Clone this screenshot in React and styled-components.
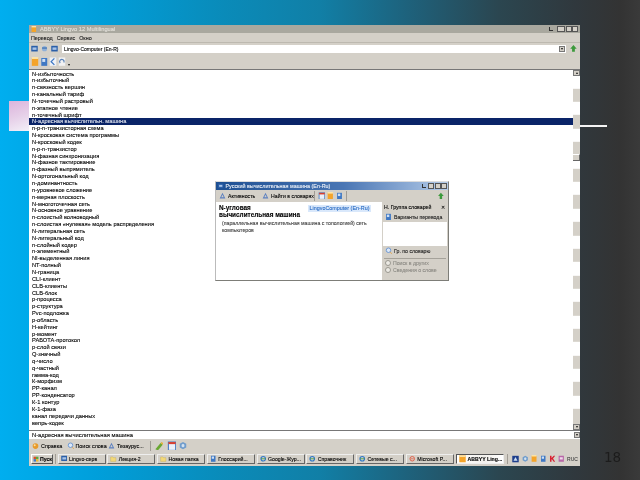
import React from "react";
import styled, { createGlobalStyle } from "styled-components";

const Global = createGlobalStyle`
  html, body { margin: 0; padding: 0; width: 640px; height: 480px; overflow: hidden; }
  #root { width: 640px; height: 480px; }
`;

const Slide = styled.div`
  position: relative;
  box-sizing: border-box;
  width: 640px;
  height: 480px;
  padding: 25px 60px 14px 29px;
  background: linear-gradient(90deg, #00aeef 0%, #009fdb 15%, #0a8bb9 35%, #117fa6 50%, #1f5f78 65%, #2b4650 78%, #30383d 90%, #333 97%, #3a3a3a 100%);
  font-family: "Liberation Sans", Arial, sans-serif;
`;

const PinkSquare = styled.div`
  position: absolute;
  left: 9px;
  top: 101px;
  width: 20px;
  height: 30px;
  background: linear-gradient(160deg, #dcb4dc 0%, #e6cfe8 50%, #f3f0f8 100%);
`;

const WhiteLine = styled.div`
  position: absolute;
  left: 580px;
  top: 124.5px;
  width: 27px;
  height: 2.5px;
  background: #f4f4f4;
`;

const PageNumber = styled.div`
  position: absolute;
  left: 604px;
  top: 449px;
  font: 13.5px "DejaVu Sans", sans-serif;
  color: #1c1c1c;
  filter: blur(0.3px);
`;

const Window = styled.div`
  position: relative;
  height: 100%;
  display: flex;
  flex-direction: column;
  background: #d4d0c8;
  filter: blur(0.4px);
  color: #000;
  font-size: 5.7px;
  -webkit-text-stroke: 0.1px currentColor;
`;

const TitleBar = styled.div`
  flex: 0 0 8px;
  display: flex;
  align-items: center;
  gap: 3px;
  padding: 0 2px;
  background: #a9a89f;
  color: #e4e2dc;
`;

const Grow = styled.div`flex: 1;`;

const WinBtn = styled.span`
  width: ${(p) => p.$w || 6}px;
  height: 6px;
  background: #d4d0c8;
  border: 0.5px solid #555;
  box-sizing: border-box;
  display: block;
`;

const WinBtns = styled.div`
  display: flex;
  align-items: center;
  gap: 0.5px;
  margin-left: ${(p) => p.$gap || 0}px;
`;

const PinMark = styled.span`
  width: 4px;
  height: 4px;
  border-left: 1px solid #333;
  border-bottom: 1px solid #333;
  box-sizing: border-box;
`;

const MenuBar = styled.div`
  flex: 0 0 9px;
  display: flex;
  align-items: center;
  gap: 4px;
  padding: 0 2px;
  font-size: 5.4px;
  color: #222;
`;

const AddressBar = styled.div`
  flex: 0 0 12px;
  display: flex;
  align-items: center;
  gap: 3px;
  padding: 0 3px 0 2px;
  border-top: 1px solid #bdb9b0;
  box-sizing: border-box;
`;

const AddressInput = styled.div`
  flex: 1;
  height: 8px;
  margin-left: 1px;
  background: #fff;
  display: flex;
  align-items: center;
  justify-content: space-between;
  padding: 0 1px 0 2px;
  font-size: 5px;
`;

const ToolRow = styled.div`
  flex: 0 0 15px;
  display: flex;
  align-items: center;
  gap: 0.5px;
  padding: 0 2px;
  box-sizing: border-box;
`;

const Arrow = styled.span`
  width: 0;
  height: 0;
  margin: 6px 0 0 2px;
  border-left: 1.5px solid transparent;
  border-right: 1.5px solid transparent;
  border-top: 2px solid #111;
`;

const ListArea = styled.div`
  flex: 1;
  min-height: 0;
  display: flex;
  background: #fff;
  border-top: 1px solid #777;
  border-bottom: 1px solid #777;
`;

const List = styled.div`
  flex: 1;
  padding-top: 0.5px;
  overflow: hidden;
`;

const Row = styled.div`
  height: 6.85px;
  line-height: 6.85px;
  padding-left: 3px;
  white-space: nowrap;
  background: ${(p) => (p.$selected ? "#0a2468" : "transparent")};
  color: ${(p) => (p.$selected ? "#dfe3ee" : "#000")};
`;

const Scrollbar = styled.div`
  flex: 0 0 7px;
  display: flex;
  flex-direction: column;
  background: repeating-linear-gradient(180deg, #d4d0c8 0, #d4d0c8 13.35px, #fff 13.35px, #fff 26.7px) 0 -8.2px;
`;

const ScrollBtn = styled.div`
  flex: 0 0 6px;
  height: 6px;
  background: #d4d0c8;
  border: 0.5px solid #777;
  box-sizing: border-box;
  display: flex;
  align-items: center;
  justify-content: center;
`;

const Tri = styled.span`
  width: 0;
  height: 0;
  border-left: 1.5px solid transparent;
  border-right: 1.5px solid transparent;
  ${(p) => (p.$up ? "border-bottom: 2px solid #111;" : "border-top: 2px solid #111;")}
`;

const ScrollGap = styled.div`
  flex: 0 0 78px;
`;

const Thumb = styled.div`
  flex: 0 0 7px;
  background: #d4d0c8;
  border-bottom: 1px solid #666;
  border-right: 1px solid #666;
  border-top: 0.5px solid #fff;
  box-sizing: border-box;
`;

const ScrollFill = styled.div`
  flex: 1;
`;

const StatusInput = styled.div`
  flex: 0 0 8px;
  display: flex;
  align-items: center;
  justify-content: space-between;
  background: #fff;
  padding: 0 0.5px 0 3px;
  font-size: 5.8px;
`;

const LinksBar = styled.div`
  flex: 0 0 13px;
  display: flex;
  align-items: center;
  padding-left: 3px;
  gap: 3.5px;
  font-size: 5.4px;
`;

const LinkItem = styled.span`
  display: flex;
  align-items: center;
  gap: 2px;
  width: ${(p) => p.$w}px;
  white-space: nowrap;
`;

const Sep = styled.span`
  width: 1px;
  height: 10px;
  background: #a09c94;
  margin: 0 ${(p) => p.$m ?? 2}px;
  flex: none;
`;

const TaskBar = styled.div`
  flex: 0 0 14px;
  display: flex;
  align-items: center;
  gap: 1.75px;
  padding: 0 2px;
  font-size: 5.2px;
`;

const StartBtn = styled.div`
  width: 22px;
  height: 10px;
  box-sizing: border-box;
  display: flex;
  align-items: center;
  gap: 1px;
  padding-left: 1px;
  font-weight: bold;
  background: #d4d0c8;
  border-right: 1px solid #555;
  border-bottom: 1px solid #555;
  border-top: 1px solid #fff;
  border-left: 1px solid #fff;
`;

const TaskBtn = styled.div`
  width: 48px;
  height: 10px;
  box-sizing: border-box;
  display: flex;
  align-items: center;
  gap: 2px;
  padding-left: 2px;
  white-space: nowrap;
  overflow: hidden;
  flex: none;
  font-weight: ${(p) => (p.$active ? "bold" : "normal")};
  background: ${(p) => (p.$active ? "linear-gradient(90deg,#fff,#f2f0ec 60%,#fff)" : "#d4d0c8")};
  border-right: 1px solid ${(p) => (p.$active ? "#eee" : "#666")};
  border-bottom: 1px solid ${(p) => (p.$active ? "#eee" : "#666")};
  border-top: 1px solid ${(p) => (p.$active ? "#555" : "#eee")};
  border-left: 1px solid ${(p) => (p.$active ? "#555" : "#eee")};
`;

const Tray = styled.div`
  display: flex;
  align-items: center;
  gap: 2.6px;
  font-size: 5px;
  color: #444;
`;

const Dialog = styled.div`
  position: absolute;
  left: 186px;
  top: 156px;
  width: 234px;
  height: 100px;
  box-sizing: border-box;
  display: flex;
  flex-direction: column;
  background: #d4d0c8;
  border: 1px solid #7d7d78;
  border-top-color: #ddd;
  border-left-color: #bbb;
`;

const DialogTitle = styled.div`
  flex: 0 0 7.5px;
  display: flex;
  align-items: center;
  gap: 2px;
  padding: 0 1px 0 2px;
  background: linear-gradient(90deg, #1d4f92 0%, #4a76b4 55%, #b4cbe8 100%);
  color: #eef2f8;
  font-size: 5.4px;
`;

const DialogTools = styled.div`
  flex: 0 0 12px;
  display: flex;
  align-items: center;
  gap: 2px;
  padding: 0 4px 0 3px;
  font-size: 5.2px;
`;

const ToolLabel = styled.span`
  width: ${(p) => p.$w}px;
  white-space: nowrap;
`;

const DialogBody = styled.div`
  flex: 1;
  min-height: 0;
  display: flex;
`;

const Article = styled.div`
  position: relative;
  flex: 1;
  min-width: 0;
  background: #fff;
  padding: 2px 2px 0 3px;
`;

const Headword = styled.div`
  font-weight: bold;
  font-size: 6.4px;
  line-height: 7.5px;
`;

const Definition = styled.div`
  margin: 1px 0 0 3px;
  font-size: 5.2px;
  line-height: 7px;
  color: #444;
  white-space: nowrap;
`;

const Badge = styled.div`
  position: absolute;
  left: 92px;
  top: 3px;
  width: 63px;
  height: 7px;
  background: #d9e8fb;
  color: #2a6cc4;
  font-size: 5.4px;
  line-height: 7px;
  text-align: center;
  white-space: nowrap;
`;

const Side = styled.div`
  flex: 0 0 66px;
  display: flex;
  flex-direction: column;
  font-size: 5.2px;
`;

const SideHead = styled.div`
  flex: 0 0 10px;
  display: flex;
  align-items: center;
  justify-content: space-between;
  padding: 0 3px 0 2px;
`;

const SideRow = styled.div`
  flex: 0 0 ${(p) => p.$h || 10}px;
  display: flex;
  align-items: center;
  gap: 2px;
  padding-left: 3px;
  color: ${(p) => (p.$muted ? "#8c8a84" : "#222")};
`;

const SideBox = styled.div`
  flex: 0 0 24px;
  margin: 0 1px;
  background: #fff;
`;

const SideRule = styled.div`
  flex: 0 0 1px;
  margin: 1px 2px 1px;
  background: #a5a29a;
`;

const Ring = styled.span`
  width: 6px;
  height: 6px;
  box-sizing: border-box;
  border: 1px solid #9a9890;
  border-radius: 50%;
  background: #eceae4;
  flex: none;
`;

const ICONS = {
  blueBox: <><rect x="0" y="1" width="8" height="7" fill="#2b5fa8" /><rect x="1.5" y="3" width="5" height="3" fill="#a9c4e8" /></>,
  arrows: <><circle cx="4" cy="4.5" r="3.2" fill="#8fb0d8" /><path d="M1 3h6v1.5H1z" fill="#3f6fb0" /></>,
  book: <><rect x="0.5" y="1" width="6.5" height="8" fill="#f4a42a" /><rect x="0.5" y="0" width="6.5" height="2" fill="#fbe3a8" /></>,
  page: <><rect x="1" y="1" width="6" height="8" fill="#3f78c4" /><rect x="2" y="2" width="3" height="3" fill="#cfe0f4" /></>,
  swirl: <><rect x="0.5" y="0.5" width="7" height="9" fill="#eef2f8" /><path d="M5.5 1.5 2 5l3.5 3.5" fill="none" stroke="#3f78c4" strokeWidth="1.4" /></>,
  swirl2: <><rect x="0.5" y="0.5" width="7" height="9" fill="#f2f2f2" /><path d="M2 6.5A2.4 2.4 0 1 1 6 6" fill="none" stroke="#5a82b8" strokeWidth="1.3" /></>,
  green: <path d="M4.5 1 8 5H6v3.5H3V5H1z" fill="#3c9a3c" />,
  orangeBall: <><circle cx="4" cy="5" r="3.5" fill="#e89a2a" /><circle cx="3" cy="4" r="1.2" fill="#fde0a0" /></>,
  lens: <><circle cx="4" cy="4" r="2.8" fill="#dbe8f8" stroke="#5a8cd0" strokeWidth="1" /><path d="M6 6l2 2.5" stroke="#e0a040" strokeWidth="1" /></>,
  tri: <path d="M4 1 7.5 8h-7zM4 3.5 2.5 6.5h3z" fill="#5a7fc0" fillRule="evenodd" />,
  pencil: <><path d="M1 8 6 2l2 1.5L3.5 9z" fill="#6aa832" /><path d="M6 2l2 1.5 .5-1.5L7 1z" fill="#e8b030" /></>,
  win: <><rect x="1" y="1" width="7" height="8" fill="#eaf0f8" stroke="#3f78c4" /><rect x="1" y="1" width="7" height="2" fill="#d84030" /></>,
  cube: <><path d="M4 1 7.5 3v4L4 9 .5 7V3z" fill="#6f9ccc" /><path d="M4 3 5.5 4v2L4 7 2.5 6V4z" fill="#d4e2f0" /></>,
  flag: <><rect x="0.5" y="1" width="3.5" height="3.5" fill="#d8502a" /><rect x="4" y="1" width="3.5" height="3.5" fill="#5aa83c" /><rect x="0.5" y="4.5" width="3.5" height="3.5" fill="#3f78c4" /><rect x="4" y="4.5" width="3.5" height="3.5" fill="#e8b830" /></>,
  ie: <><circle cx="4" cy="5" r="3" fill="none" stroke="#2f78c8" strokeWidth="1.5" /><path d="M1 5h6" stroke="#3c9a3c" /></>,
  folder: <><path d="M0.5 2.5h3l1 1h3v5h-7z" fill="#f2d878" stroke="#b8983c" strokeWidth=".4" /></>,
  pptx: <><circle cx="4" cy="5" r="3" fill="none" stroke="#e0604a" strokeWidth="1.3" /><path d="M2 5h4" stroke="#e0604a" /></>,
  k: <path d="M1 1h2v3l3-3h2L5 4.5 8 9H6L3.5 5.5 3 6v3H1z" fill="#d82030" />,
  lingvo: <><rect x="0" y="0.5" width="8" height="8.5" fill="#f4a42a" /><rect x="0" y="0.5" width="8" height="2" fill="#fbe0a0" /></>,
  shield: <><rect x="0" y="1" width="8" height="8" fill="#1f3f8c" /><path d="M4 2.5 6.5 7h-5z" fill="#cfe0f4" /></>,
  purple: <><rect x="0.5" y="1" width="7" height="8" fill="#b868a8" /><rect x="2" y="3" width="4" height="3" fill="#f0d8ec" /></>,
};

const Icon = ({ name, size = 7 }) => (
  <svg width={size} height={size * 1.1} viewBox="0 0 8 9.5" style={{ flex: "none", display: "block" }}>
    {ICONS[name]}
  </svg>
);

const ROWS = [
  "N-избыточность", "n-избыточный", "n-связность вершин", "n-канальный тариф", "N-точечный растровый",
  "n-этапное чтение", "n-точечный шрифт", "N-адресная вычислительн. машина", "n-р-n-транзисторная схема",
  "N-кросковая система программы", "N-кросковый кодек", "n-р-n-транзистор", "N-фазная синхронизация",
  "N-фазное тактирование", "n-фазный выпрямитель", "N-ортогональный код", "n-доминантность",
  "n-уровневое сложение", "n-мерная плоскость", "N-многоточечная сеть", "N-основное уравнение",
  "n-слоистый волноводный", "n-слоистая «нулевая» модель распределения", "N-литеральная сеть", "N-литеральный код",
  "n-слойный кодер", "n-элементный", "NI-выделенная линия", "NT-полный", "N-граница", "CLI-клиент",
  "CLB-клиенты", "CLB-блок", "р-процесса", "р-структура", "Pvc-подложка", "р-область",
  "Н-кейтинг", "р-момент", "РАБОТА-протокол", "р-слой связи", "Q-значный", "q-число", "q-частный",
  "гамма-код", "К-морфизм", "РР-канал", "РР-конденсатор", "К-1 контур", "К-1-фаза", "канал передачи данных", "вепрь-кодек",
];

const TASKS = [
  ["blueBox", "Lingvo-серв"], ["folder", "Лекция-2"], ["folder", "Новая папка"],
  ["page", "Глоссарий..."], ["ie", "Google-Жур..."], ["ie", "Справочник"],
  ["ie", "Сетевые с..."], ["pptx", "Microsoft P..."],
];

export default function App() {
  return (
    <>
      <Global />
      <Slide>
        <PinkSquare />
        <WhiteLine />
        <PageNumber>18</PageNumber>
        <Window>
          <TitleBar>
            <Icon name="book" size={6} />
            <span>ABBYY Lingvo 12 Multilingual</span>
            <Grow />
            <PinMark />
            <WinBtns $gap={1}>
              <WinBtn $w={8} />
              <WinBtn />
              <WinBtn />
            </WinBtns>
          </TitleBar>
          <MenuBar>
            <span>Перевод</span><span>Сервис</span><span>Окно</span>
          </MenuBar>
          <AddressBar>
            <Icon name="blueBox" />
            <Icon name="arrows" />
            <Icon name="blueBox" />
            <AddressInput>
              <span>Lingvo-Computer (En-R)</span>
              <ScrollBtn><Tri /></ScrollBtn>
            </AddressInput>
            <Icon name="green" size={8} />
          </AddressBar>
          <ToolRow>
            <Icon name="book" size={8.5} />
            <Icon name="page" size={8.5} />
            <Icon name="swirl" size={8} />
            <Icon name="swirl2" size={8} />
            <Arrow />
          </ToolRow>
          <ListArea>
            <List>
              {ROWS.map((r, i) => (
                <Row key={i} $selected={i === 7}>{r}</Row>
              ))}
            </List>
            <Scrollbar>
              <ScrollBtn><Tri $up /></ScrollBtn>
              <ScrollGap />
              <Thumb />
              <ScrollFill />
              <ScrollBtn><Tri /></ScrollBtn>
            </Scrollbar>
          </ListArea>
          <StatusInput>
            <span>N-адресная вычислительная машина</span>
            <ScrollBtn><Tri /></ScrollBtn>
          </StatusInput>
          <LinksBar>
            <LinkItem $w={31}><Icon name="orangeBall" />Справка</LinkItem>
            <LinkItem $w={38}><Icon name="lens" />Поиск слова</LinkItem>
            <LinkItem $w={38}><Icon name="tri" />Тезаурус...</LinkItem>
            <Sep $m={0} />
            <Icon name="pencil" size={9} />
            <Icon name="win" size={9} />
            <Icon name="cube" size={8} />
          </LinksBar>
          <TaskBar>
            <StartBtn><Icon name="flag" size={6} />Пуск</StartBtn>
            <Sep $m={0} />
            {TASKS.map(([ic, t], i) => (
              <TaskBtn key={i}><Icon name={ic} size={6.5} />{t}</TaskBtn>
            ))}
            <TaskBtn $active><Icon name="lingvo" size={7} />ABBYY Ling...</TaskBtn>
            <Sep $m={2} />
            <Tray>
              <Icon name="shield" size={7} />
              <Icon name="cube" size={6.5} />
              <Icon name="book" size={6.5} />
              <Icon name="page" size={6.5} />
              <Icon name="k" size={6.5} />
              <Icon name="purple" size={6.5} />
              <span>RUС</span>
            </Tray>
          </TaskBar>
          <Dialog>
            <DialogTitle>
              <Icon name="blueBox" size={5.5} />
              <span>Русский вычислительная машина (En-Ru)</span>
              <Grow />
              <PinMark />
              <WinBtns>
                <WinBtn />
                <WinBtn />
                <WinBtn />
              </WinBtns>
            </DialogTitle>
            <DialogTools>
              <Icon name="tri" />
              <ToolLabel $w={32}>Активность</ToolLabel>
              <Icon name="tri" />
              <ToolLabel $w={40}>Найти в словарях</ToolLabel>
              <Sep $m={1} />
              <Icon name="win" />
              <Icon name="book" />
              <Icon name="page" />
              <Sep $m={1} />
              <Grow />
              <Icon name="green" size={7} />
            </DialogTools>
            <DialogBody>
              <Article>
                <Badge>LingvoComputer (En-Ru)</Badge>
                <Headword>N-угловая</Headword>
                <Headword>вычислительная машина</Headword>
                <Definition>(параллельная вычислительная машина с топологией) сеть<br />компьютеров</Definition>
              </Article>
              <Side>
                <SideHead><span>Н. Группа словарей</span><span>✕</span></SideHead>
                <SideRow $h={10}><Icon name="page" />Варианты перевода</SideRow>
                <SideBox />
                <SideRow $h={11}><Icon name="lens" />Гр. по словарю</SideRow>
                <SideRule />
                <SideRow $h={7} $muted><Ring />Поиск в других</SideRow>
                <SideRow $h={7} $muted><Ring />Сведения о слове</SideRow>
              </Side>
            </DialogBody>
          </Dialog>
        </Window>
      </Slide>
    </>
  );
}
